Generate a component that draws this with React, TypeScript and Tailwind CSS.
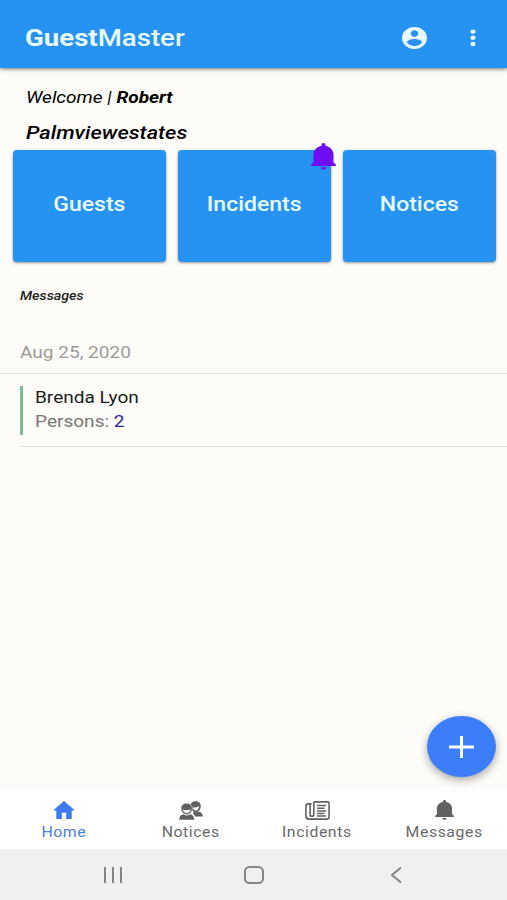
import { type ReactNode } from "react";

type IconProps = { className?: string };

function AccountIcon({ className }: IconProps) {
  return (
    <svg
      className={className}
      viewBox="2 2 20 20"
      preserveAspectRatio="none"
      fill="currentColor"
    >
      <path d="M12 2C6.48 2 2 6.48 2 12s4.48 10 10 10 10-4.48 10-10S17.52 2 12 2zm0 3c1.66 0 3 1.34 3 3s-1.34 3-3 3-3-1.34-3-3 1.34-3 3-3zm0 14.2c-2.5 0-4.71-1.28-6-3.22.03-1.99 4-3.08 6-3.08 1.99 0 5.97 1.09 6 3.08-1.29 1.94-3.5 3.22-6 3.22z" />
    </svg>
  );
}

function MoreIcon({ className }: IconProps) {
  return (
    <svg className={className} viewBox="0 0 6 18" fill="currentColor">
      <ellipse cx="3" cy="2.6" rx="2.6" ry="2.2" />
      <ellipse cx="3" cy="8.8" rx="2.6" ry="2.2" />
      <ellipse cx="3" cy="15" rx="2.6" ry="2.2" />
    </svg>
  );
}

function BellIcon({ className }: IconProps) {
  return (
    <svg
      className={className}
      viewBox="0 0 25 27"
      preserveAspectRatio="none"
      fill="currentColor"
    >
      <path d="M12.5 0c-1.2 0-2 .9-2 2v.7C5.800 3.600 2.500 7.200 2.500 11.600V19.400L.2 21.400v1.500h24.600v-1.500L22.500 19.400V11.600c0-4.400-3.300-8-8-8.900V2c0-1.100-.8-2-2-2z" />
      <path d="M9.500 24.300h6c-.3 1.500-1.500 2.500-3 2.500s-2.700-1-3-2.500z" />
    </svg>
  );
}

function HomeIcon({ className }: IconProps) {
  return (
    <svg
      className={className}
      viewBox="2 3 20 17"
      preserveAspectRatio="none"
      fill="currentColor"
    >
      <path d="M10 20v-6h4v6h5v-8h3L12 3 2 12h3v8z" />
    </svg>
  );
}

function PeopleIcon({ className }: IconProps) {
  return (
    <svg className={className} viewBox="0 0 24 19" fill="currentColor">
      {/* back person */}
      <path d="M16.600.3c3.100 0 5.200 1.900 5.200 4.700 0 3.300-2.200 6.200-5.200 6.200s-5.100-2.900-5.100-6.200c0-2.800 2-4.700 5.100-4.700z" />
      <path
        d="M13.800 6.600c2.200.1 4.500-.3 6.300-1.500-.2 2.500-1.500 4.500-3.600 4.500-1.400 0-2.300-1.200-2.700-3z"
        fill="#fff"
      />
      <path d="M16 15.600c-.3-1.200-1-2-2-2.600l.8-2.500c1.900.9 3.500.9 5 .1 2.400.6 4 2.100 4.100 5z" />
      {/* front person */}
      <path
        d="M7.700 2.300c3.300 0 5.600 2 5.600 4.900 0 3.400-2.400 6.300-5.600 6.300S2.100 10.600 2.100 7.200c0-2.900 2.300-4.900 5.600-4.900z"
        stroke="#fff"
        strokeWidth="0.5"
      />
      <path
        d="M3.800 8.600c2.700.7 5.200.7 7.800 0-.4 2.200-1.900 3.500-3.900 3.500s-3.500-1.300-3.900-3.500z"
        fill="#fff"
      />
      <path d="M.2 18.700c.1-3 1.400-4.700 4-5.400 2 1.500 5 1.500 7 0 2.600.7 3.900 2.400 4 5.400z" />
    </svg>
  );
}

function NewspaperIcon({ className }: IconProps) {
  return (
    <svg
      className={className}
      viewBox="0 0 25 19"
      fill="none"
      stroke="currentColor"
      strokeWidth="1.6"
    >
      <path d="M8.800.9h13.600c1.100 0 1.700.6 1.700 1.600v13.200c0 1.500-1 2.400-2.600 2.400H4.200C2 18.100.9 17 .9 15V5.200c0-1.400.8-2.300 2.200-2.300h3.500" />
      <path d="M8.800.9v12.500c0 1.200-.7 1.900-1.800 1.900s-1.900-.7-1.900-1.900V3" />
      <path
        d="M12 4.600h9M12 7.300h7.500M12 9.900h9M12 12.500h7.500M12 15.100h9"
        strokeWidth="1.500"
      />
    </svg>
  );
}

/* Roboto set wide, the box keeps its natural width */
function Wide({
  children,
  className = "",
}: {
  children: ReactNode;
  className?: string;
}) {
  return (
    <span className={`inline-block whitespace-nowrap ${className}`}>
      {children}
    </span>
  );
}

function Tile({ label, badge }: { label: string; badge?: boolean }) {
  return (
    <button className="relative flex h-28 flex-1 items-center justify-center rounded bg-[#2693f3] pb-1 text-[20px] font-medium text-[#e6fcff] shadow-[0_1px_3px_rgba(0,0,0,0.4)]">
      <Wide className="scale-x-[1.15]">{label}</Wide>
      {badge && (
        <BellIcon className="absolute -top-[7px] -right-[5px] h-[27px] w-[25px] text-[#6f0df5]" />
      )}
    </button>
  );
}

const tabs = [
  {
    label: "Home",
    icon: <HomeIcon className="mb-px h-[18px] w-[22px]" />,
    color: "text-[#3c7bf0]",
    labelColor: "text-[#4a80d6]",
  },
  {
    label: "Notices",
    icon: <PeopleIcon className="h-[19px] w-[24px]" />,
    color: "text-[#616161]",
    labelColor: "text-[#6a6a6a]",
  },
  {
    label: "Incidents",
    icon: <NewspaperIcon className="h-[19px] w-[25px]" />,
    color: "text-[#616161]",
    labelColor: "text-[#6a6a6a]",
  },
  {
    label: "Messages",
    icon: <BellIcon className="ml-[2px] h-[20px] w-[19px]" />,
    color: "text-[#616161]",
    labelColor: "text-[#6a6a6a]",
  },
];

export default function App() {
  return (
    <div className="relative flex h-[900px] w-[507px] flex-col overflow-hidden bg-[#fdfcf8] font-['Roboto',sans-serif]">
      {/* App bar */}
      <header className="flex h-[68px] shrink-0 items-center bg-[#2693f3] pt-[7px] pr-[31px] pl-[25px] text-[#e9fbff] shadow-[0_1px_4px_rgba(0,0,0,0.55)]">
        <h1 className="flex-1 pt-[2px] text-[23px] leading-none">
          <Wide className="origin-left scale-x-[1.2]">
            <span className="font-bold">Guest</span>
            <span className="font-medium">Master</span>
          </Wide>
        </h1>
        <AccountIcon className="mr-[43px] h-[22px] w-[25px]" />
        <MoreIcon className="h-[18px] w-[6px]" />
      </header>

      <main className="flex-1">
        <div className="flex flex-col pt-[20px] pl-[26px] text-black italic">
          <p className="h-[35px] text-[16px] leading-[20px]">
            <Wide className="origin-left scale-x-[1.19]">
              Welcome | <b>Robert</b>
            </Wide>
          </p>
          <p className="h-[27px] text-[18px] leading-[20px] font-medium">
            <Wide className="origin-left scale-x-[1.21]">Palmviewestates</Wide>
          </p>
        </div>

        <div className="flex gap-3 pr-[11px] pl-[13px]">
          <Tile label="Guests" />
          <Tile label="Incidents" badge />
          <Tile label="Notices" />
        </div>

        <h2 className="pt-[26px] pl-5 text-[12px] leading-4 font-medium text-[#222] italic">
          <Wide className="origin-left scale-x-[1.19]">Messages</Wide>
        </h2>

        <div className="mt-[36px] h-[34px] border-b border-[#e2e1de] pl-[20px] text-[16px] leading-[25px] text-[#9b9b99]">
          <Wide className="origin-left scale-x-[1.19]">Aug 25, 2020</Wide>
        </div>
        <div className="ml-5 border-b border-[#dfdedb] pt-3 pb-[11px]">
          <div className="h-[49px] border-l-[3px] border-[#7fbd8f] pl-3 text-[16px] leading-6">
            <p className="text-[#1c1c1c]">
              <Wide className="origin-left scale-x-[1.19]">Brenda Lyon</Wide>
            </p>
            <p className="text-[#777]">
              <Wide className="origin-left scale-x-[1.19]">
                Persons: <span className="text-[#2a1f9d]">2</span>
              </Wide>
            </p>
          </div>
        </div>
      </main>

      {/* Add button */}
      <button className="absolute top-[716px] left-[427px] flex h-[61px] w-[69px] items-center justify-center rounded-[50%] bg-[#3c7df9] text-white shadow-[0_3px_8px_rgba(0,0,0,0.35)]">
        <svg
          className="h-[22px] w-[25px]"
          viewBox="0 0 25 22"
          stroke="currentColor"
          strokeWidth="3"
        >
          <path d="M0 11h25M12.500 0v22" />
        </svg>
      </button>

      <nav className="flex h-[61px] shrink-0 bg-white pt-px pl-px">
        {tabs.map((tab) => (
          <div
            key={tab.label}
            className={`flex flex-1 flex-col items-center ${tab.color}`}
          >
            <div className="flex h-[32px] items-end pb-[1px]">{tab.icon}</div>
            <span
              className={`pt-px text-[14px] leading-5 tracking-[0.5px] ${tab.labelColor}`}
            >
              <Wide className="scale-x-[1.13]">{tab.label}</Wide>
            </span>
          </div>
        ))}
      </nav>

      {/* System navigation */}
      <footer className="flex h-[51px] shrink-0 items-center bg-[#f0f0f0] pl-[103px] text-[#858585]">
        <svg
          className="h-[18px] w-[20px]"
          viewBox="0 0 20 18"
          stroke="currentColor"
          strokeWidth="2"
        >
          <path d="M2 1v16M10 1v16M18 1v16" />
        </svg>
        <svg
          className="ml-[121px] h-[18px] w-[20px]"
          viewBox="0 0 20 18"
          fill="none"
          stroke="currentColor"
          strokeWidth="2"
        >
          <rect x="1" y="1" width="18" height="16" rx="4.500" />
        </svg>
        <svg
          className="ml-[126px] h-[18px] w-[12px]"
          viewBox="0 0 12 18"
          fill="none"
          stroke="currentColor"
          strokeWidth="2"
        >
          <path d="M11 1.500L2 9l9 7.500" />
        </svg>
      </footer>
    </div>
  );
}
